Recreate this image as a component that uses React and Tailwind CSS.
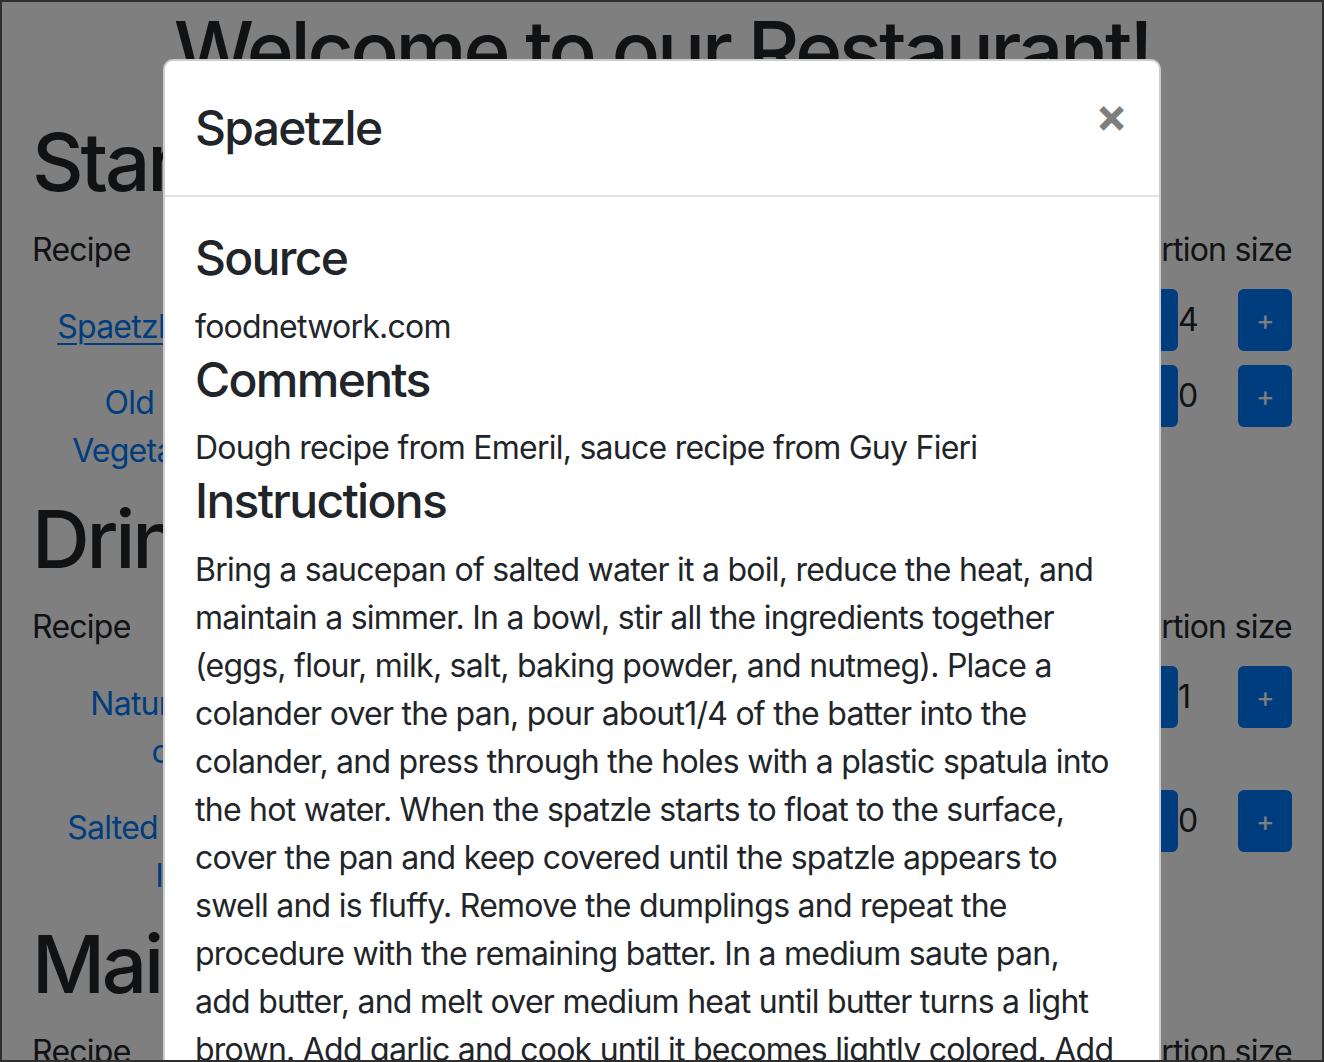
import React from 'react';

const starters = [
  { lines: ['Spaetzle'], count: 4, w: 'w-[176px]', hover: true },
  { lines: ['Old Fashioned', 'Vegetable Goulash'], count: 0, w: 'w-[352px]' },
];

const drinks = [
  { lines: ['Natural Orange', 'cordial'], count: 1, w: 'w-[336px]' },
  { lines: ['Salted Caramel', 'Ice'], count: 0, w: 'w-[290px]' },
];

const instructions = [
  'Bring a saucepan of salted water it a boil, reduce the heat, and',
  'maintain a simmer. In a bowl, stir all the ingredients together',
  '(eggs, flour, milk, salt, baking powder, and nutmeg). Place a',
  'colander over the pan, pour about1/4 of the batter into the',
  'colander, and press through the holes with a plastic spatula into',
  'the hot water. When the spatzle starts to float to the surface,',
  'cover the pan and keep covered until the spatzle appears to',
  'swell and is fluffy. Remove the dumplings and repeat the',
  'procedure with the remaining batter. In a medium saute pan,',
  'add butter, and melt over medium heat until butter turns a light',
  'brown. Add garlic and cook until it becomes lightly colored. Add',
  'the spaetzle and toss until heated through. Season to taste.',
];

const RecipeRow = ({ item }) => (
  <div className="flex items-start justify-between">
    <div className={`${item.w} pt-[14px] text-center leading-[48px]`}>
      <a
        href="#"
        className={`text-[#007bff] ${item.hover ? 'underline decoration-2 underline-offset-[5px]' : 'no-underline'}`}
      >
        {item.lines.map((l, i) => (
          <React.Fragment key={i}>
            {i > 0 && <br />}
            {l}
          </React.Fragment>
        ))}
      </a>
    </div>
    <div className="flex items-center">
      <button className="w-[54px] h-[62px] rounded-[6px] bg-[#007bff] text-white text-[28px] leading-none">
        −
      </button>
      <span className="w-[60px] text-left leading-[48px]">{item.count}</span>
      <button className="w-[54px] h-[62px] rounded-[6px] bg-[#007bff] text-white text-[28px] leading-none">
        +
      </button>
    </div>
  </div>
);

const Section = ({ title, items }) => (
  <div className="mb-[16px]">
    <h1 className="text-[80px] font-medium leading-[96px] tracking-[-3.2px] mb-[16px]">{title}</h1>
    <div className="flex justify-between leading-[48px] mb-[15px]">
      <span>Recipe</span>
      <span>Portion size</span>
    </div>
    <div className="flex flex-col gap-[14px]">
      {items.map((item, i) => (
        <RecipeRow key={i} item={item} />
      ))}
    </div>
  </div>
);

const App = () => {
  return (
    <div
      className="relative w-[1324px] h-[1062px] overflow-hidden border-2 border-[#2e2e2e] bg-white text-[#212529] text-[32px] tracking-[-0.75px]"
      style={{ fontFamily: 'Inter, "Noto Sans", sans-serif' }}
    >
      {/* page behind the modal */}
      <div className="px-[30px]">
        <h1 className="text-[80px] font-medium leading-[96px] tracking-[-3.2px] mb-[16px] text-center whitespace-nowrap">
          Welcome to our Restaurant!
        </h1>
        <Section title="Starters" items={starters} />
        <Section title="Drinks" items={drinks} />
        <Section title="Mains" items={[]} />
      </div>

      {/* backdrop */}
      <div className="absolute inset-0 bg-black/50" />

      {/* modal */}
      <div className="absolute left-[161px] top-[57px] w-[998px] h-[1100px] rounded-[10px] border-2 border-black/20 bg-white">
        <div className="flex items-start justify-between px-[30px] pt-[32px] pb-[32px] border-b-2 border-[#dee2e6]">
          <h4 className="text-[48px] font-medium leading-[70px] tracking-[-1.7px]">Spaetzle</h4>
          <button className="text-[48px] font-bold leading-none text-black opacity-50 -mt-[2px] mr-[2px]">×</button>
        </div>
        <div className="px-[30px] py-[32px]">
          <h4 className="text-[48px] font-medium leading-[57.6px] tracking-[-1.7px] mb-[16px]">Source</h4>
          <p className="leading-[48px]">foodnetwork.com</p>
          <h4 className="text-[48px] font-medium leading-[57.6px] tracking-[-1.7px] mb-[16px]">Comments</h4>
          <p className="leading-[48px]">Dough recipe from Emeril, sauce recipe from Guy Fieri</p>
          <h4 className="text-[48px] font-medium leading-[57.6px] tracking-[-1.7px] mb-[16px]">Instructions</h4>
          <p className="leading-[48px] whitespace-nowrap">
            {instructions.map((l, i) => (
              <React.Fragment key={i}>
                {i > 0 && <br />}
                {l}
              </React.Fragment>
            ))}
          </p>
        </div>
      </div>
    </div>
  );
};

export default App;
